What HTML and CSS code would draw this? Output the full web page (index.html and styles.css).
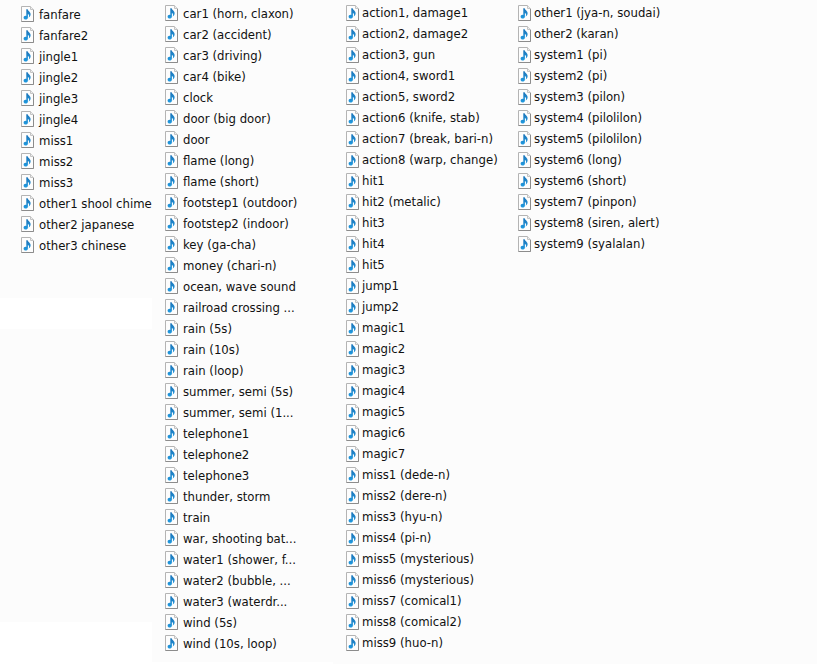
FILE: index.html
```html
<!DOCTYPE html>
<html lang="en">
<head>
  <meta charset="UTF-8">
  <meta name="viewport" content="width=device-width, initial-scale=1.0">
  <title>Sound Files</title>
  <link rel="stylesheet" href="styles.css">
</head>
<body>

  <!-- Sound file icon -->
  <svg class="sprite" aria-hidden="true">
    <defs>
      <linearGradient id="note-color" x1="0" y1="0" x2="0" y2="1">
        <stop offset="0" stop-color="#1d74b8"/>
        <stop offset="1" stop-color="#1f9ae0"/>
      </linearGradient>
    </defs>
    <symbol id="sound" viewBox="0 0 13 16">
      <path d="M.5 .5H9.5L12.5 3.5V15.5H.5Z" fill="#fdfdfd" stroke="#b4b4b4"/>
      <path d="M12.5 4V15.5H.5" fill="none" stroke="#8c8c8c"/>
      <path d="M9.5 .5V3.5H12.5" fill="#eee" stroke="#c4c4c4"/>
      <path d="M5.3 3.2H6.7C6.9 5.2 9.8 5.8 9.6 8.4C9.5 9.7 8.8 10.8 7.6 11.6C8.4 9.9 8.4 8.5 6.9 7.9V11.4C6.9 12.8 5.8 13.5 4.7 13.5C3.5 13.5 2.6 12.8 2.6 11.7C2.6 10.2 4 9.5 5.3 9.9Z" fill="url(#note-color)"/>
    </symbol>
  </svg>

  <main class="files">
    <section class="column jingles">
      <ul class="list"></ul>
      <div class="gap"></div>
    </section>
    <section class="column effects">
      <ul class="list"></ul>
    </section>
    <section class="column actions">
      <ul class="list"></ul>
    </section>
    <section class="column system">
      <ul class="list"></ul>
    </section>
  </main>

  <script src="files.js"></script>
</body>
</html>
```

FILE: styles.css
```css
body {
  margin: 0;
  background-color: #fff;
  color: #111;
  font-family: "DejaVu Sans Condensed", Tahoma, sans-serif;
  font-size: 13px;
  line-height: 21px;
}

.sprite {
  position: absolute;
  width: 0;
  height: 0;
}

/* Columns */
.files {
  display: grid;
  grid-template-columns: 152px 181px 172px 1fr;
  padding-bottom: 6px;
}
.column {
  background-color: #fcfcfc;
}
.list {
  list-style: none;
  margin: 0;
  padding: 3px 0 8px 13px;
}
.jingles {
  margin-bottom: 42px;
}
.jingles .list {
  padding: 4px 0 42px 21px;
}
.effects {
  margin-bottom: 2px;
}
.actions .list,
.system .list {
  padding: 2px 0 11px 13px;
}
.gap {
  height: 31px;
  background-color: #fff;
}

/* File rows */
.file {
  display: flex;
  align-items: flex-start;
  gap: 5px;
  white-space: nowrap;
}
.icon {
  flex: none;
  width: 13px;
  height: 16px;
  margin-top: 2px;
}
.actions .file,
.system .file {
  gap: 3px;
}
.actions .icon,
.system .icon {
  margin-top: 3px;
}
```

FILE: files.js
```js
const files = {
  jingles: [
    "fanfare", "fanfare2", "jingle1", "jingle2", "jingle3", "jingle4",
    "miss1", "miss2", "miss3",
    "other1 shool chime", "other2 japanese", "other3 chinese"
  ],
  effects: [
    "car1 (horn, claxon)", "car2 (accident)", "car3 (driving)", "car4 (bike)",
    "clock", "door (big door)", "door", "flame (long)", "flame (short)",
    "footstep1 (outdoor)", "footstep2 (indoor)", "key (ga-cha)",
    "money (chari-n)", "ocean, wave sound", "railroad crossing ...",
    "rain (5s)", "rain (10s)", "rain (loop)",
    "summer, semi (5s)", "summer, semi (1...",
    "telephone1", "telephone2", "telephone3", "thunder, storm", "train",
    "war, shooting bat...", "water1 (shower, f...", "water2 (bubble, ...",
    "water3 (waterdr...", "wind (5s)", "wind (10s, loop)"
  ],
  actions: [
    "action1, damage1", "action2, damage2", "action3, gun",
    "action4, sword1", "action5, sword2", "action6 (knife, stab)",
    "action7 (break, bari-n)", "action8 (warp, change)",
    "hit1", "hit2 (metalic)", "hit3", "hit4", "hit5", "jump1", "jump2",
    "magic1", "magic2", "magic3", "magic4", "magic5", "magic6", "magic7",
    "miss1 (dede-n)", "miss2 (dere-n)", "miss3 (hyu-n)", "miss4 (pi-n)",
    "miss5 (mysterious)", "miss6 (mysterious)", "miss7 (comical1)",
    "miss8 (comical2)", "miss9 (huo-n)"
  ],
  system: [
    "other1 (jya-n, soudai)", "other2 (karan)", "system1 (pi)",
    "system2 (pi)", "system3 (pilon)", "system4 (pilolilon)",
    "system5 (pilolilon)", "system6 (long)", "system6 (short)",
    "system7 (pinpon)", "system8 (siren, alert)", "system9 (syalalan)"
  ]
};

// Fill each column with its files
for (const group in files) {
  const list = document.querySelector("." + group + " .list");
  list.innerHTML = files[group].map(name => `
    <li class="file">
      <svg class="icon" aria-hidden="true"><use href="#sound"/></svg>
      <span class="name">${name}</span>
    </li>`).join("");
}
```
